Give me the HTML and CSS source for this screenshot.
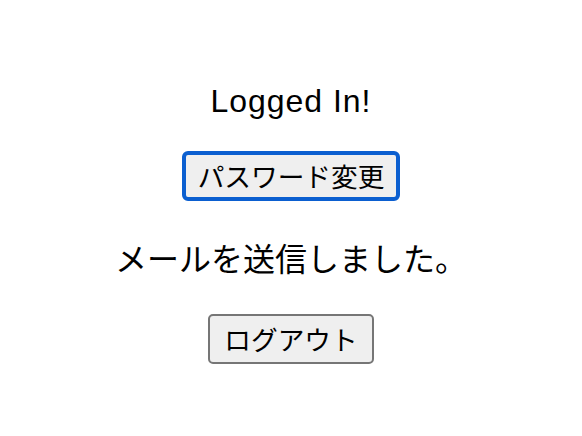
FILE: index.html
```html
<!DOCTYPE html>
<html lang="ja">
<head>
<meta charset="utf-8">
<title>Logged In</title>
<link rel="stylesheet" href="styles.css">
</head>
<body>
<div class="app">
  <div class="title">Logged In!</div>
  <button class="btn btn-focus" type="button">パスワード変更</button>
  <p class="message">メールを送信しました。</p>
  <button class="btn btn-logout" type="button">ログアウト</button>
</div>
</body>
</html>
```
FILE: styles.css
```css
html, body {
  margin: 0;
  padding: 0;
  background: #ffffff;
}
.app {
  display: flex;
  flex-direction: column;
  align-items: center;
  padding-top: 81px;
  color: #000000;
}
.title {
  font-family: "Liberation Sans", "Noto Sans CJK JP", sans-serif;
  font-size: 32px;
  line-height: 40px;
  letter-spacing: 0.03em;
  height: 40px;
}
.btn {
  font-family: "Noto Sans CJK JP", "Liberation Sans", sans-serif;
  font-size: 26.67px;
  line-height: 46px;
  height: 50px;
  box-sizing: border-box;
  padding: 0 14px;
  margin: 0;
  background: #efefef;
  border: 2px solid #767676;
  border-radius: 5px;
  color: #000000;
}
.btn-focus {
  margin-top: 30px;
  border: 4px solid #0b5fd0;
  border-radius: 6px;
  padding: 0 12px;
  line-height: 42px;
}
.message {
  font-family: "Noto Sans CJK JP", "Liberation Sans", sans-serif;
  font-size: 32px;
  line-height: 40px;
  height: 40px;
  margin: 36px 0 0 0;
}
.btn-logout {
  margin-top: 37px;
}
```
